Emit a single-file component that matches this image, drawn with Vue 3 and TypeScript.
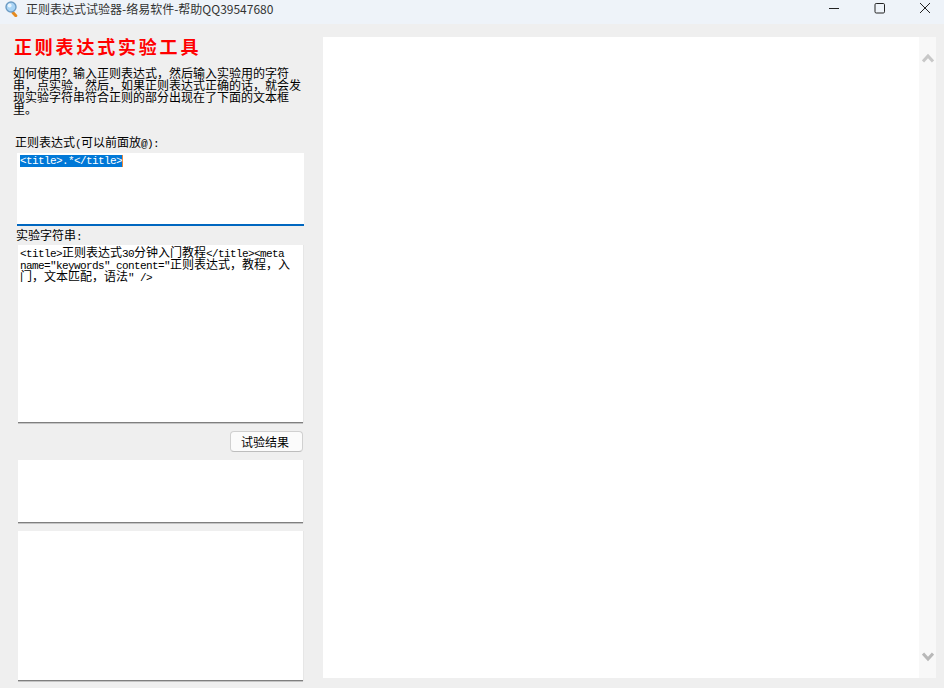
<script setup lang="ts">
const pattern = '<title>.*</title>'
const sample =
  '<title>正则表达式30分钟入门教程</title><meta name="keywords" content="正则表达式，教程，入门，文本匹配，语法" />'

// latin text is set in a narrower mono so that it takes half a CJK cell
const runs = sample.match(/[\x20-\x7e]+|[^\x20-\x7e]+/g) ?? []
const isLatin = (s: string) => /^[\x20-\x7e]/.test(s)
</script>

<template>
  <div class="window">
    <header class="titlebar">
      <svg class="app-icon" width="14" height="16" viewBox="0 0 14 16">
        <rect x="8.2" y="9.6" width="7" height="3" rx="1.4" transform="rotate(48 8.2 9.6)" fill="#e58a1f" />
        <circle cx="6" cy="6" r="5" fill="#a9d4f5" stroke="#6d9cc4" stroke-width="1.4" />
        <circle cx="4.6" cy="4.4" r="2" fill="#e6f4fe" />
      </svg>
      <span class="app-title">正则表达式试验器-络易软件-帮助QQ39547680</span>
      <div class="controls">
        <svg width="12" height="12" viewBox="0 0 12 12"><path d="M1 6.5h10" stroke="#222" fill="none" /></svg>
        <svg width="12" height="12" viewBox="0 0 12 12">
          <rect x="1" y="1.5" width="9.5" height="9.5" rx="1.2" stroke="#222" fill="none" />
        </svg>
        <svg width="12" height="12" viewBox="0 0 12 12">
          <path d="M1 1l10 10M11 1L1 11" stroke="#222" fill="none" />
        </svg>
      </div>
    </header>

    <main class="content">
      <section class="left">
        <h1 class="heading">正则表达式实验工具</h1>
        <p class="intro">
          如何使用？输入正则表达式，然后输入实验用的字符串，点实验，然后，如果正则表达式正确的话，就会发现实验字符串符合正则的部分出现在了下面的文本框里。
        </p>
        <label class="label first">正则表达式<span class="en">(</span>可以前面放<span class="en">@):</span></label>
        <div class="box box-pattern">
          <span class="selected en">{{ pattern }}</span>
        </div>
        <label class="label second">实验字符串<span class="en">:</span></label>
        <div class="box box-sample">
          <template v-for="(run, i) in runs" :key="i">
            <span v-if="isLatin(run)" class="en">{{ run }}</span>
            <template v-else>{{ run }}</template>
          </template>
        </div>
        <div class="actions">
          <button class="run-btn" type="button">试验结果</button>
        </div>
        <div class="box box-result"></div>
        <div class="box box-output"></div>
      </section>

      <section class="right">
        <div class="page"></div>
        <div class="scrollbar">
          <svg width="12" height="10" viewBox="0 0 12 10">
            <path d="M1 8.5L6 3l5 5.5" stroke="#c8c8c8" stroke-width="3" fill="none" />
          </svg>
          <svg width="12" height="10" viewBox="0 0 12 10">
            <path d="M1 1.5L6 7l5-5.5" stroke="#b8b8b8" stroke-width="3" fill="none" />
          </svg>
        </div>
      </section>
    </main>
  </div>
</template>

<style>
html,
body {
  margin: 0;
  background: #efefef;
}
</style>

<style scoped>
.window {
  width: 944px;
  height: 688px;
  display: flex;
  flex-direction: column;
  overflow: hidden;
  background: #efefef;
  color: #000;
  font-family: "Noto Sans CJK SC", "Liberation Sans", sans-serif;
  font-size: 12px;
}
.titlebar {
  height: 24px;
  flex: none;
  display: flex;
  align-items: flex-start;
  background: #eef3f9;
  padding-left: 5px;
  box-sizing: border-box;
}
.app-icon {
  margin-top: 1px;
}
.app-title {
  margin-left: 7px;
  line-height: 17px;
  color: #333;
}
.controls {
  margin-left: auto;
  width: 103px;
  margin-right: 13px;
  padding-top: 2px;
  display: flex;
  justify-content: space-between;
}
.content {
  flex: 1;
  display: flex;
  min-height: 0;
}
.left {
  width: 323px;
  flex: none;
  display: flex;
  flex-direction: column;
  padding-top: 12px;
  box-sizing: border-box;
}
.heading {
  margin: 0 0 0 14px;
  height: 20px;
  line-height: 20px;
  font-size: 18px;
  font-weight: 700;
  letter-spacing: 2.8px;
  color: #ff0000;
  white-space: nowrap;
}
.intro {
  margin: 11px 0 0 13px;
  width: 290px;
  line-height: 12px;
}
.label {
  line-height: 12px;
  height: 12px;
}
.label.first {
  margin: 21px 0 5px 15px;
}
.label.second {
  margin: 3px 0 4px 16px;
}
.box {
  margin-left: 18px;
  width: 285px;
  box-sizing: border-box;
  background: #fff;
  border-bottom: 1px solid #7f7f7f;
  box-shadow: 1px 0 0 #e6e6e6, 0 1px 0 #c4c4c4;
  line-height: 12px;
}
.box-pattern {
  height: 73px;
  margin-left: 17px;
  width: 287px;
  padding: 2px 0 0 3px;
  border-bottom: 2px solid #0067c0;
  box-shadow: none;
}
.box-sample {
  height: 178px;
  padding: 1px 10px 0 2px;
}
.box-result {
  height: 63px;
}
.box-output {
  height: 150px;
  margin-top: 8px;
}
.en {
  font-family: "Liberation Mono", monospace;
  font-size: 11px;
  letter-spacing: -0.6px;
  line-height: 0;
}
.selected {
  display: inline-block;
  height: 12px;
  line-height: 12px;
  background: #0078d7;
  color: #fff;
  border-right: 1px solid #e8873a;
  vertical-align: top;
}
.actions {
  height: 21px;
  margin: 8px 0;
  display: flex;
  justify-content: flex-end;
  width: 303px;
}
.run-btn {
  width: 73px;
  height: 21px;
  padding: 0 3px 0 0;
  box-sizing: border-box;
  border: 1px solid #d0d0d0;
  border-bottom-color: #bdbdbd;
  border-radius: 4px;
  background: #fbfbfb;
  color: #000;
  font: inherit;
  line-height: 17px;
}
.right {
  width: 613px;
  height: 641px;
  margin-top: 13px;
  flex: none;
  display: flex;
}
.page {
  flex: 1;
  background: #fff;
}
.scrollbar {
  width: 17px;
  flex: none;
  background: #f8f8f8;
  display: flex;
  flex-direction: column;
  justify-content: space-between;
  align-items: center;
  padding: 16px 0;
  box-sizing: border-box;
}
</style>
